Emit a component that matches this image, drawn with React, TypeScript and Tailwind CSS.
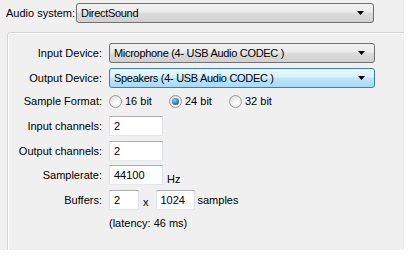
import React from "react";

const font = { fontFamily: '"Liberation Sans", Arial, sans-serif' };

function Arrow() {
  return (
    <svg width="7" height="4" viewBox="0 0 7 4" className="shrink-0">
      <path d="M0 0 H7 L3.5 4 Z" fill="#000" />
    </svg>
  );
}

function Combo({ text, hot, className }: { text: string; hot?: boolean; className: string }) {
  return (
    <div
      className={
        "h-[20px] flex items-center justify-between pl-[4px] pr-[9px] rounded-[3px] border " +
        (hot
          ? "border-[#3c7fb1] bg-[linear-gradient(#eaf6fd_0%,#d9f0fc_45%,#bee6fd_50%,#a7d9f5_100%)] "
          : "border-[#707070] bg-[linear-gradient(#f2f2f2_0%,#ebebeb_45%,#dddddd_50%,#cfcfcf_100%)] ") +
        className
      }
    >
      <span className="text-[11px] text-black leading-none tracking-[-0.3px]">{text}</span>
      <Arrow />
    </div>
  );
}

function Radio({ checked }: { checked?: boolean }) {
  return (
    <span className="w-[13px] h-[13px] rounded-full border border-[#979797] bg-[radial-gradient(circle_at_60%_65%,#ffffff_0%,#f4f4f4_40%,#d4d4d4_100%)] flex items-center justify-center shrink-0">
      {checked && (
        <span className="w-[7px] h-[7px] rounded-full bg-[radial-gradient(circle_at_40%_35%,#8ad3f5_0%,#2b6fb5_60%,#174a86_100%)]" />
      )}
    </span>
  );
}

function Box({ value, w }: { value: string; w: string }) {
  return (
    <div
      className={
        "h-[20px] bg-white border border-[#abadb3] border-l-[#e2e3ea] border-r-[#dbdfe6] border-b-[#e3e9ef] flex items-center pl-[4px] text-[11px] text-black " +
        w
      }
    >
      {value}
    </div>
  );
}

function Label({ children }: { children: React.ReactNode }) {
  return <div className="w-[94px] text-right text-[11px] text-black">{children}</div>;
}

export default function App() {
  return (
    <div className="w-[409px] h-[260px] bg-white" style={font}>
      <div className="w-[404px] h-[250px] bg-[#f0f0f0] flex flex-col">
        <div className="flex items-center pt-[3px] pl-[6px] h-[23px]">
          <span className="text-[11px] text-black w-[70px]">Audio system:</span>
          <Combo text="DirectSound" className="w-[298px]" />
        </div>
        <div className="mt-[9px] ml-[7px] flex-1 border-t border-l border-t-[#d5d5d5] border-l-[#d5d5d5] rounded-tl-[3px] shadow-[inset_1px_1px_0_#ffffff] flex flex-col pt-[10px]">
          <div className="flex items-center gap-[7px] h-[20px]">
            <Label>Input Device:</Label>
            <Combo text="Microphone (4- USB Audio CODEC )" className="w-[266px]" />
          </div>
          <div className="flex items-center gap-[7px] h-[20px] mt-[5px]">
            <Label>Output Device:</Label>
            <Combo text="Speakers (4- USB Audio CODEC )" hot className="w-[266px]" />
          </div>
          <div className="flex items-center gap-[7px] h-[20px] mt-[3px]">
            <Label>Sample Format:</Label>
            <div className="flex items-center text-[11px] text-black">
              <Radio />
              <span className="ml-[3px] w-[44px]">16 bit</span>
              <Radio checked />
              <span className="ml-[3px] w-[44px]">24 bit</span>
              <Radio />
              <span className="ml-[3px]">32 bit</span>
            </div>
          </div>
          <div className="flex items-center gap-[7px] h-[20px] mt-[5px]">
            <Label>Input channels:</Label>
            <Box value="2" w="w-[54px]" />
          </div>
          <div className="flex items-center gap-[7px] h-[20px] mt-[5px]">
            <Label>Output channels:</Label>
            <Box value="2" w="w-[54px]" />
          </div>
          <div className="flex items-center gap-[7px] h-[20px] mt-[4px]">
            <Label>Samplerate:</Label>
            <Box value="44100" w="w-[54px]" />
            <span className="text-[11px] text-black mt-[8px] -ml-[3px]">Hz</span>
          </div>
          <div className="flex items-center gap-[7px] h-[20px] mt-[5px]">
            <Label>Buffers:</Label>
            <Box value="2" w="w-[30px]" />
            <span className="text-[11px] text-black mt-[4px] -ml-[3px]">x</span>
            <Box value="1024" w="w-[39px]" />
            <span className="text-[11px] text-black -ml-[4px]">samples</span>
          </div>
          <div className="flex items-center gap-[7px] h-[16px] mt-[5px]">
            <Label>{""}</Label>
            <span className="text-[11px] text-black">(latency: 46 ms)</span>
          </div>
        </div>
      </div>
    </div>
  );
}
